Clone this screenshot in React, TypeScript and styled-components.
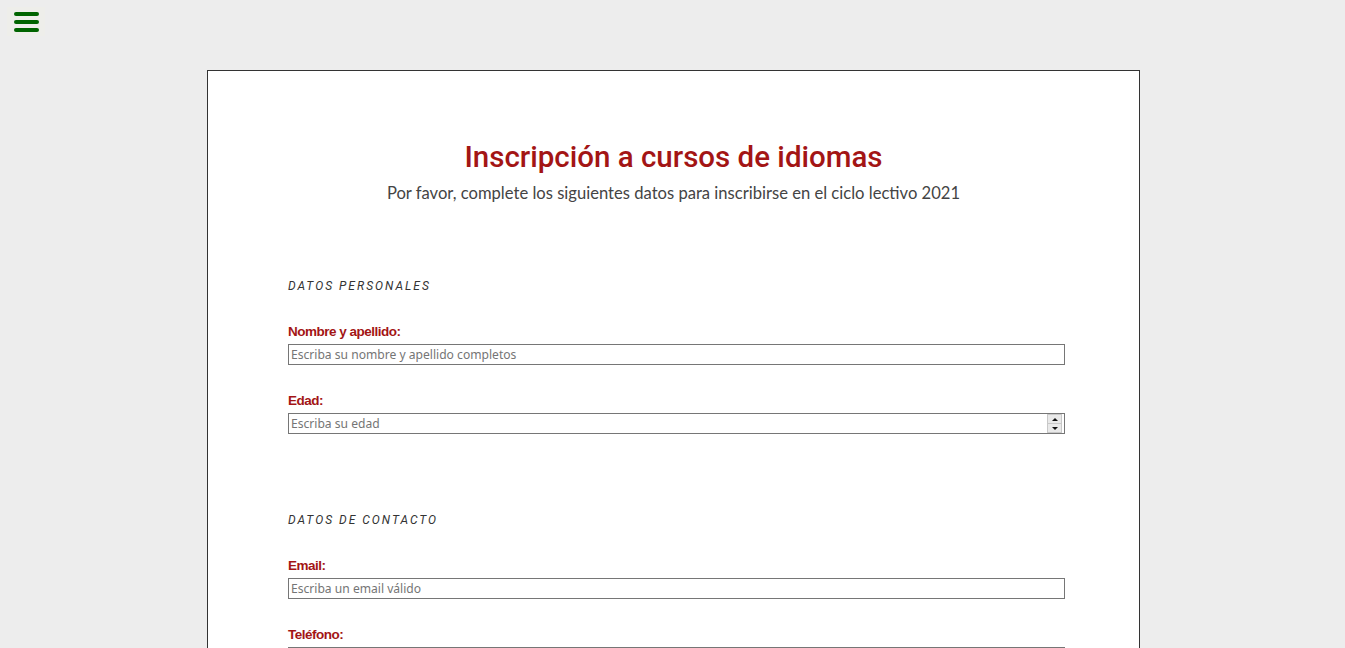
import styled, { createGlobalStyle } from 'styled-components'

const GlobalStyle = createGlobalStyle`
    html, body {
        margin: 0;
        padding: 0;
        background-color: #ededed;
    }
    * {
        box-sizing: content-box;
    }
`

const Page = styled.div`
    min-height: 648px;
    padding: 70px 0 0 2px;
`

const MenuButton = styled.button`
    position: absolute;
    top: 7px;
    left: 7px;
    width: 38px;
    height: 29px;
    padding: 0;
    border: none;
    background-color: #eeeeea;
    display: flex;
    flex-direction: column;
    align-items: center;
    justify-content: center;
    gap: 4px;
    cursor: pointer;
`

const MenuBar = styled.span`
    display: block;
    width: 25px;
    height: 4px;
    border-radius: 2px;
    background-color: #006400;
`

const Card = styled.main`
    width: 771px;
    margin: 0 auto;
    padding: 66px 80px 40px;
    background-color: #fff;
    border: 1px solid #333;
`

const Header = styled.header`
    text-align: center;
    margin-bottom: 73px;
`

const Title = styled.h1`
    margin: 0 0 4px;
    font-family: Roboto, sans-serif;
    font-weight: 500;
    font-size: 29.5px;
    line-height: 40px;
    color: #a31515;
`

const Subtitle = styled.p`
    margin: 0;
    font-family: Lato, sans-serif;
    font-size: 16.6px;
    line-height: 24px;
    color: #444;
`

const Section = styled.section`
    margin-bottom: 78px;
`

const SectionTitle = styled.h2`
    margin: 0 0 30px;
    font-family: Roboto, sans-serif;
    font-style: italic;
    font-weight: 400;
    font-size: 12px;
    line-height: 16px;
    letter-spacing: 2px;
    color: #333;
`

const Field = styled.div`
    margin-bottom: 28px;
`

const Label = styled.label`
    display: block;
    margin-bottom: 4px;
    font-family: "Liberation Sans", Arial, sans-serif;
    font-weight: 700;
    font-size: 13.5px;
    line-height: 16px;
    letter-spacing: -0.5px;
    color: #a31515;
`

const InputWrap = styled.div`
    position: relative;
`

const Input = styled.input`
    display: block;
    width: 100%;
    height: 17px;
    padding: 1px 2px;
    margin: 0;
    border: 1px solid #767676;
    font-family: "Noto Sans", sans-serif;
    font-size: 12.1px;
    color: #222;
    background: #fff;
    appearance: textfield;

    &::placeholder {
        color: #757575;
    }

    &::-webkit-inner-spin-button,
    &::-webkit-outer-spin-button {
        -webkit-appearance: none;
        margin: 0;
    }
`

const Spinner = styled.div`
    position: absolute;
    top: 1px;
    right: -3px;
    width: 15px;
    height: 19px;
    display: flex;
    flex-direction: column;
    pointer-events: none;
`

const SpinHalf = styled.span`
    flex: 1;
    display: flex;
    align-items: center;
    justify-content: center;
    background-color: #e9e9e9;
    border: 1px solid #c8c8c8;

    & + & {
        border-top: none;
    }
`

const Arrow = styled.span<{ $down?: boolean }>`
    width: 0;
    height: 0;
    border-left: 3px solid transparent;
    border-right: 3px solid transparent;
    ${p => (p.$down ? 'border-top: 3px solid #111;' : 'border-bottom: 3px solid #111;')}
`

function App() {
    return (
        <>
            <GlobalStyle />
            <Page>
                <MenuButton aria-label="Menú">
                    <MenuBar />
                    <MenuBar />
                    <MenuBar />
                </MenuButton>
                <Card>
                    <Header>
                        <Title>Inscripción a cursos de idiomas</Title>
                        <Subtitle>Por favor, complete los siguientes datos para inscribirse en el ciclo lectivo 2021</Subtitle>
                    </Header>
                    <form>
                        <Section>
                            <SectionTitle>DATOS PERSONALES</SectionTitle>
                            <Field>
                                <Label htmlFor="nombre">Nombre y apellido:</Label>
                                <Input id="nombre" type="text" placeholder="Escriba su nombre y apellido completos" />
                            </Field>
                            <Field>
                                <Label htmlFor="edad">Edad:</Label>
                                <InputWrap>
                                    <Input id="edad" type="number" placeholder="Escriba su edad" />
                                    <Spinner>
                                        <SpinHalf><Arrow /></SpinHalf>
                                        <SpinHalf><Arrow $down /></SpinHalf>
                                    </Spinner>
                                </InputWrap>
                            </Field>
                        </Section>
                        <Section>
                            <SectionTitle>DATOS DE CONTACTO</SectionTitle>
                            <Field>
                                <Label htmlFor="email">Email:</Label>
                                <Input id="email" type="email" placeholder="Escriba un email válido" />
                            </Field>
                            <Field>
                                <Label htmlFor="telefono">Teléfono:</Label>
                                <Input id="telefono" type="tel" placeholder="Escriba su teléfono" />
                            </Field>
                        </Section>
                    </form>
                </Card>
            </Page>
        </>
    )
}

export default App
